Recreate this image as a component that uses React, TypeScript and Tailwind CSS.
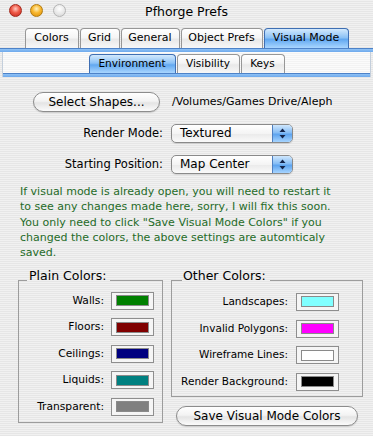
import React from "react";

// Mac OS X (Jaguar) Aqua prefs window

const mainTabs = [
  { label: "Colors", w: "w-[54px]" },
  { label: "Grid", w: "w-[40px]" },
  { label: "General", w: "w-[59px]" },
  { label: "Object Prefs", w: "w-[82px]" },
  { label: "Visual Mode", w: "w-[85px]", active: true },
];

const subTabs = [
  { label: "Environment", w: "w-[87px]", active: true },
  { label: "Visibility", w: "w-[63px]" },
  { label: "Keys", w: "w-[44px]" },
];

const plainColors = [
  { label: "Walls:", color: "bg-[#008000]" },
  { label: "Floors:", color: "bg-[#800000]" },
  { label: "Ceilings:", color: "bg-[#000080]" },
  { label: "Liquids:", color: "bg-[#008080]" },
  { label: "Transparent:", color: "bg-[#808080]" },
];

const otherColors = [
  { label: "Landscapes:", color: "bg-[#80ffff]" },
  { label: "Invalid Polygons:", color: "bg-[#ff00ff]" },
  { label: "Wireframe Lines:", color: "bg-[#ffffff]" },
  { label: "Render Background:", color: "bg-[#000000]" },
];

const Tab = ({ label, w, active, small }: { label: string; w: string; active?: boolean; small?: boolean }) => (
  <div
    className={`${w} ${small ? "h-[19px] text-[10.5px]" : "h-[20px] text-[11px]"} flex items-center justify-center rounded-t-[4px] border border-b-0 ${
      active
        ? "border-[#3f6fb3] bg-[linear-gradient(180deg,#d3e9fd_0%,#8cc2f6_45%,#62a8f0_55%,#a9d6ff_100%)]"
        : "border-[#979797] bg-[linear-gradient(180deg,#ffffff_0%,#f5f5f5_45%,#e9e9e9_55%,#f7f7f7_100%)]"
    }`}
  >
    {label}
  </div>
);

const BlueBand = () => (
  <div className="h-[4px] border-t border-[#4d82c8] bg-[linear-gradient(180deg,#8fc2f5_0%,#6ea9ec_100%)]" />
);

const Light = ({ c }: { c: string }) => (
  <span className={`block w-[13px] h-[13px] rounded-full ${c}`} />
);

const Popup = ({ value }: { value: string }) => (
  <div className="w-[122px] h-[19px] flex rounded-[5px] border border-[#8a8a8a] bg-[linear-gradient(180deg,#ffffff_0%,#f4f4f4_50%,#ebebeb_55%,#fafafa_100%)] shadow-[0_1px_1px_rgba(0,0,0,0.12)]">
    <span className="flex-1 pl-[8px] text-[12px] leading-[17px]">{value}</span>
    <span className="w-[20px] flex items-center justify-center rounded-r-[4px] border-l border-[#4f7fc0] bg-[linear-gradient(180deg,#cfe7fd_0%,#86bdf5_45%,#5ea4ef_55%,#a6d4ff_100%)]">
      <svg width="7" height="11" viewBox="0 0 7 11">
        <path d="M3.5 0.5 L6.5 4 L0.5 4 Z" fill="#14244a" />
        <path d="M0.5 7 L6.5 7 L3.5 10.5 Z" fill="#14244a" />
      </svg>
    </span>
  </div>
);

const AquaButton = ({ label, w }: { label: string; w: string }) => (
  <button className={`${w} h-[20px] rounded-full border border-[#8c8c8c] bg-[linear-gradient(180deg,#ffffff_0%,#f3f3f3_45%,#e4e4e4_55%,#fbfbfb_100%)] shadow-[0_1px_1px_rgba(0,0,0,0.15)] text-[12px] leading-[18px] text-black`}>
    {label}
  </button>
);

const Swatch = ({ color }: { color: string }) => (
  <div className="w-[43px] h-[18px] flex items-center justify-center border border-[#8e8e8e] bg-[#f5f5f5]">
    <div className={`w-[33px] h-[11px] border border-[#8a8a8a] ${color}`} />
  </div>
);

export default function App() {
  return (
    <div className="w-[373px] h-[436px] overflow-hidden text-black font-['DejaVu_Sans',sans-serif] bg-[image:repeating-linear-gradient(180deg,#f1f1f1_0px,#f1f1f1_1px,#e6e6e6_1px,#e6e6e6_2px)]">
      {/* Title bar */}
      <div className="h-[22px] grid grid-cols-[1fr_auto_1fr] items-center">
        <div className="flex items-center pl-[9px] pb-[1px]">
          <Light c="border border-[#a3281c] bg-[radial-gradient(circle_at_50%_35%,#ffc9bf_0%,#ef5a48_45%,#c0241a_100%)]" />
          <span className="ml-[8px]" />
          <Light c="border border-[#b07a10] bg-[radial-gradient(circle_at_50%_35%,#fff2c0_0%,#f8b830_45%,#d98a06_100%)]" />
          <span className="ml-[10px]" />
          <Light c="border border-[#b4b4b4] bg-[radial-gradient(circle_at_50%_35%,#ffffff_0%,#eaeaea_50%,#d2d2d2_100%)]" />
        </div>
        <div className="text-[12.5px] leading-[15px]">Pfhorge Prefs</div>
        <div />
      </div>

      {/* Main tabs */}
      <div className="mt-[6px] flex justify-center gap-[1px]">
        {mainTabs.map((t) => (
          <Tab key={t.label} {...t} />
        ))}
      </div>
      <BlueBand />

      {/* Sub tabs */}
      <div className="mx-[2px] pt-[2px] bg-[image:repeating-linear-gradient(180deg,#fbfbfb_0px,#fbfbfb_1px,#f3f3f3_1px,#f3f3f3_2px)] border-x border-[#c4cfdc]">
        <div className="flex justify-center gap-[1px]">
          {subTabs.map((t) => (
            <Tab key={t.label} {...t} small />
          ))}
        </div>
        <BlueBand />
      </div>

      {/* Environment panel */}
      <div className="pt-[15px]">
        <div className="flex items-center pl-[33px]">
          <AquaButton label="Select Shapes..." w="w-[127px]" />
          <span className="ml-[12px] text-[11px]">/Volumes/Games Drive/Aleph</span>
        </div>

        <div className="mt-[12px] flex items-center">
          <span className="w-[171px] pr-[8px] text-right text-[11.5px]">Render Mode:</span>
          <Popup value="Textured" />
        </div>
        <div className="mt-[12px] flex items-center">
          <span className="w-[171px] pr-[8px] text-right text-[11.5px]">Starting Position:</span>
          <Popup value="Map Center" />
        </div>

        <div className="mt-[10px] pl-[20px] text-[11px] leading-[15.25px] text-[#256b28] whitespace-nowrap">
          <div>If visual mode is already open, you will need to restart it</div>
          <div>to see any changes made here, sorry, I will fix this soon.</div>
          <div>You only need to click "Save Visual Mode Colors" if you</div>
          <div>changed the colors, the above settings are automticaly</div>
          <div>saved.</div>
        </div>

        <div className="mt-[8px] flex items-start pl-[18px] gap-[8px]">
          <fieldset className="w-[145px] border border-[#9c9c9c]">
            <legend className="ml-[8px] pl-[2px] pr-[4px] pb-[8.6px] text-[12.5px] leading-[15px]">Plain Colors:</legend>
            <div className="flex flex-col gap-[8.5px] pb-[6px]">
              {plainColors.map((c) => (
                <div key={c.label} className="flex items-center justify-end gap-[7px] pr-[8px]">
                  <span className="text-[10.7px]">{c.label}</span>
                  <Swatch color={c.color} />
                </div>
              ))}
            </div>
          </fieldset>

          <div className="w-[192px] flex flex-col items-center">
            <fieldset className="w-[192px] border border-[#9c9c9c]">
              <legend className="ml-[10px] pl-[1px] pr-[4px] pb-[8.6px] text-[12.5px] leading-[15px]">Other Colors:</legend>
              <div className="flex flex-col gap-[8.7px] pt-[1px] pb-[5px]">
                {otherColors.map((c) => (
                  <div key={c.label} className="flex items-center justify-end gap-[8px] pr-[23px]">
                    <span className="text-[10.5px]">{c.label}</span>
                    <Swatch color={c.color} />
                  </div>
                ))}
              </div>
            </fieldset>
            <div className="mt-[6px]">
              <AquaButton label="Save Visual Mode Colors" w="w-[182px] text-[12.5px]" />
            </div>
          </div>
        </div>
      </div>
    </div>
  );
}
